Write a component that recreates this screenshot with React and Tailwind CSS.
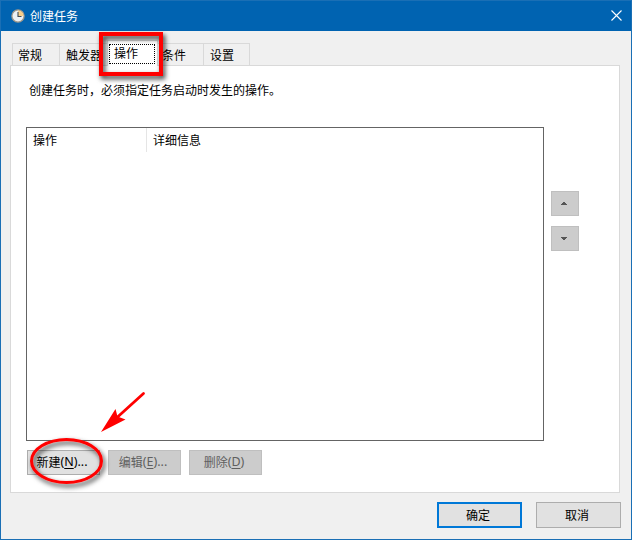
import React from "react";

const tabs = [
  { label: "常规", className: "w-[48px] pl-[5px]" },
  { label: "触发器", className: "w-[49px] pl-[6px]" },
  { label: "操作", active: true },
  { label: "条件", className: "w-[48px] pl-[6px]" },
  { label: "设置", className: "w-[46px] pl-[6px]" },
];

const ClockIcon = () => (
  <svg width="14" height="14" viewBox="0 0 14 14">
    <circle cx="7" cy="7" r="6.1" fill="#eef1f4" stroke="#a39a8c" strokeWidth="1.3" />
    <path d="M7 7V1.5A5.5 5.5 0 0 1 12.5 7Z" fill="#f9cf8a" />
    <path d="M7 3V7.5H10.5" fill="none" stroke="#3f4a55" strokeWidth="1.1" />
  </svg>
);

const Tab = ({ tab, first }) => {
  if (tab.active) {
    return (
      <div className="z-10 -mr-[2px] -mb-px -ml-[2px] flex h-[26px] w-[51px] border border-b-0 border-[#d9d9d9] bg-white px-px pt-[3px]">
        <div className="h-[20px] w-[46px] border border-dotted border-black pl-[4px] leading-[17px]">
          {tab.label}
        </div>
      </div>
    );
  }
  return (
    <div
      className={`${tab.className} ${
        first ? "border-l" : ""
      } h-[22px] border-t border-r border-[#d9d9d9] bg-[#f0f0f0] leading-[23px] whitespace-nowrap`}
    >
      {tab.label}
    </div>
  );
};

const ActionButton = ({ text, hotkey, dots, disabled }) => (
  <button
    disabled={disabled}
    className={`flex h-[25px] w-[73px] items-center justify-center border pr-[3px] ${
      disabled
        ? "border-[#bfbfbf] bg-[#cccccc] text-[#606060]"
        : "border-[#adadad] bg-[#e1e1e1] text-black"
    }`}
  >
    {text}
    <span className="text-[12.5px]">
      (<span className="underline underline-offset-2">{hotkey}</span>){dots ? "..." : ""}
    </span>
  </button>
);

const SpinButton = ({ down }) => (
  <button className="flex h-[25px] w-[28px] items-center justify-center border border-[#bfbfbf] bg-[#cccccc] pr-[2px]">
    <svg width="6" height="3" viewBox="0 0 6 3" shapeRendering="crispEdges">
      <path
        d={down ? "M0 0H6V1H5V2H4V3H2V2H1V1H0Z" : "M0 3H6V2H5V1H4V0H2V1H1V2H0Z"}
        fill="#555"
      />
    </svg>
  </button>
);

const App = () => {
  return (
    <div className="relative flex h-[540px] w-[632px] flex-col overflow-hidden border border-[#1a6fb5] bg-[#f0f0f0] font-['Noto_Sans','Noto_Sans_CJK_SC',sans-serif] text-[12px] text-black">
      <div className="flex h-[30px] shrink-0 items-center bg-[#0063b1] pl-[10px] text-white">
        <ClockIcon />
        <div className="ml-[5px] pt-px">创建任务</div>
        <svg className="mr-[9px] mb-px ml-auto" width="11" height="11" viewBox="0 0 11 11">
          <path d="M0.5 0.5L10.5 10.5M10.5 0.5L0.5 10.5" stroke="#fff" strokeWidth="1.1" />
        </svg>
      </div>

      <div className="mt-[9px] ml-[11px] flex h-[25px] items-end">
        {tabs.map((tab, i) => (
          <Tab key={tab.label} tab={tab} first={i === 0} />
        ))}
      </div>

      <div className="ml-[9px] h-[428px] w-[610px] shrink-0 border border-[#d9d9d9] bg-white pl-[15px]">
        <div className="pt-[15px] pl-[3px] leading-[20px]">
          创建任务时，必须指定任务启动时发生的操作。
        </div>
        <div className="mt-[26px] flex">
          <div className="h-[314px] w-[518px] border border-[#646464]">
            <div className="flex h-[24px] leading-[25px]">
              <div className="w-[120px] border-r border-[#e5e5e5] pl-[6px]">操作</div>
              <div className="pl-[6px]">详细信息</div>
            </div>
          </div>
          <div className="mt-[64px] ml-[7px] flex flex-col gap-[10px]">
            <SpinButton />
            <SpinButton down />
          </div>
        </div>
        <div className="mt-[9px] ml-px flex gap-[8px]">
          <ActionButton text="新建" hotkey="N" dots />
          <ActionButton text="编辑" hotkey="E" dots disabled />
          <ActionButton text="删除" hotkey="D" disabled />
        </div>
      </div>

      <div className="mt-[9px] mr-[10px] flex justify-end gap-[14px]">
        <button className="h-[26px] w-[85px] border-2 border-[#0078d7] bg-[#e1e1e1] pr-[3px] leading-[21px]">
          确定
        </button>
        <button className="h-[26px] w-[85px] border border-[#adadad] bg-[#e1e1e1] pr-[3px] leading-[23px]">
          取消
        </button>
      </div>

      {/* red marks over the dialog */}
      <svg
        className="pointer-events-none absolute -top-px -left-px z-20"
        width="632"
        height="540"
        viewBox="0 0 632 540"
        fill="none"
      >
        <defs>
          <filter id="shadow" x="-30%" y="-30%" width="160%" height="160%">
            <feDropShadow dx="2" dy="3" stdDeviation="2.8" floodColor="#000" floodOpacity="0.8" />
          </filter>
        </defs>
        <rect x="101" y="34" width="60" height="40" stroke="#f00" strokeWidth="4" filter="url(#shadow)" />
        <ellipse cx="66.5" cy="461" rx="35" ry="21.5" stroke="#f00" strokeWidth="3" filter="url(#shadow)" />
        <path d="M143.5 393.5L117 417.5" stroke="#f00" strokeWidth="2.8" strokeLinecap="round" />
        <path d="M101 432L115.5 409L117.5 416.5L125.5 419.5Z" fill="#f00" />
      </svg>
    </div>
  );
};

export default App;
